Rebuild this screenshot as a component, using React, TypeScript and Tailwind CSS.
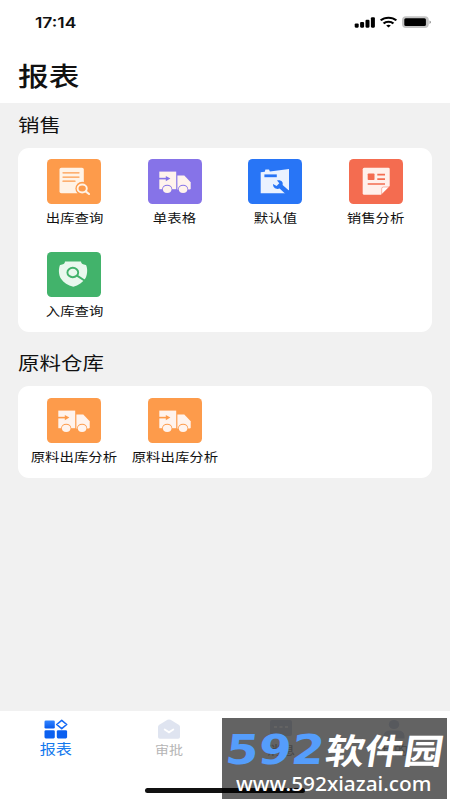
import React from "react";

type IconProps = { color: string };

function Tile({ color, children }: { color: string; children: React.ReactNode }) {
  return (
    <svg width="54" height="45" viewBox="0 0 54 45" className="block shrink-0">
      <rect width="54" height="45" rx="4.5" fill={color} />
      {children}
    </svg>
  );
}

function DocSearch({ color }: IconProps) {
  return (
    <Tile color={color}>
      <rect x="12.5" y="8.7" width="24.3" height="25.5" rx="1.8" fill="#fff3e6" />
      <path d="M16 13.8H32M16 18.1H32M16 22.2H28" stroke={color} strokeWidth="1.3" strokeLinecap="round" />
      <circle cx="35.2" cy="29.5" r="6.8" fill={color} />
      <path d="M38.5 32.5L42.3 35.4" stroke={color} strokeWidth="4" />
      <ellipse cx="35.2" cy="29.5" rx="4.6" ry="4" fill={color} stroke="#fff3e6" strokeWidth="1.9" />
      <path d="M38.7 32.4L42 35" stroke="#fff3e6" strokeWidth="2.1" strokeLinecap="round" />
    </Tile>
  );
}

function Truck({ color }: IconProps) {
  return (
    <Tile color={color}>
      <path d="M11.3 12.6H28.2V30.2H11.3Z" fill="#fff3ed" />
      <path d="M29.4 16.4H36.3L42.7 23.2V29.3Q42.7 30.5 41.4 30.5H29.4Z" fill="#fff3ed" />
      <path d="M10.5 19.6H19" stroke={color} strokeWidth="1.6" />
      <path d="M17.8 16.9L22.4 19.6L17.8 22.3Z" fill={color} />
      <ellipse cx="19.2" cy="30.2" rx="5.1" ry="4.4" fill={color} />
      <ellipse cx="35.1" cy="30.2" rx="5.1" ry="4.4" fill={color} />
      <ellipse cx="19.2" cy="30.3" rx="4.3" ry="3.6" fill="#fff3ed" />
      <ellipse cx="35.1" cy="30.3" rx="4.3" ry="3.6" fill="#fff3ed" />
    </Tile>
  );
}

function Wrench({ color }: IconProps) {
  return (
    <Tile color={color}>
      <path d="M12.7 13.2L16.8 12.8L17.4 10.5H21L21.9 12.5L41 10V31L38 34.3H12.7Z" fill="#eaf2ff" />
      <path d="M16.4 15.4H28.8V18.2H16.4Z" fill={color} />
      <path d="M29 21.5C33 20.5 35.5 23 34.6 26L42 32.5L38.6 36L31.6 29.6C28 30.8 24.9 28.7 25 25L28.6 26.9L31.3 24.2Z" fill={color} />
    </Tile>
  );
}

function Report({ color }: IconProps) {
  return (
    <Tile color={color}>
      <path d="M15.2 8.7H39.3Q40.7 8.7 40.7 10V27L32 35.7H15.2Q13.7 35.7 13.7 34.2V10.2Q13.7 8.7 15.2 8.7Z" fill="#fff0eb" />
      <path d="M32.7 35.2V29.7Q32.7 28 34.5 28H40L32.7 35.2Z" fill="#fff" stroke={color} strokeWidth=".5" />
      <rect x="18.7" y="14.5" width="6.8" height="6.5" rx=".8" fill={color} />
      <path d="M28.3 15.6H36M28.3 20.2H36M18.7 25H36" stroke={color} strokeWidth="1.7" />
    </Tile>
  );
}

function Shield({ color }: IconProps) {
  return (
    <Tile color={color}>
      <path d="M18 9.6H34C34 11.8 36.5 13 39 12.9C40.6 15.8 40.7 21.7 38.6 26C36 30.6 31.4 33.3 26.3 34.8C20.9 33.2 16.6 30.8 14 26.7C11.5 22.4 11.4 16.8 13 12.9C15.7 13 18 11.8 18 9.6Z" fill="#e9f8ee" />
      <ellipse cx="25.8" cy="20.5" rx="5.4" ry="4.7" fill="none" stroke={color} strokeWidth="1.9" />
      <path d="M30 23.7L39 29.5" stroke={color} strokeWidth="2" />
    </Tile>
  );
}

function Entry({ icon, label }: { icon: React.ReactNode; label: string }) {
  return (
    <div className="flex h-[92.5px] w-[100.5px] flex-col items-center">
      {icon}
      <span className="mt-[5.2px] block origin-center scale-x-[1.17] text-[12.3px] leading-[18px] whitespace-nowrap">{label}</span>
    </div>
  );
}

function Section({ title, className, children }: { title: string; className: string; children: React.ReactNode }) {
  return (
    <section>
      <h2 className="ml-[18px] h-[45px] w-max origin-left scale-x-[1.18] text-[18.2px] leading-[43px]">{title}</h2>
      <div className={`mx-[18px] flex flex-wrap content-start rounded-[11px] bg-white px-1.5 pt-[11.5px] ${className}`}>{children}</div>
    </section>
  );
}

function StatusBar() {
  return (
    <div className="flex h-11 items-center pl-[35px]">
      <span className="mt-[2px] w-max origin-left scale-x-[1.21] font-['Inter'] text-[14.4px] leading-none font-semibold">17:14</span>
      <svg width="80" height="16" viewBox="0 0 80 16" className="ml-auto mr-[17px]">
        <g fill="#000">
          <rect x="1.7" y="9.5" width="4" height="4.2" rx="1.1" />
          <rect x="7.1" y="7.9" width="4" height="5.8" rx="1.1" />
          <rect x="12.5" y="5.8" width="4" height="7.9" rx="1.1" />
          <rect x="17.9" y="3.2" width="4" height="10.5" rx="1.1" />
        </g>
        <g transform="translate(35.5 12.1) scale(1.17 1)" fill="none" stroke="#000" strokeWidth="2">
          <path d="M-6.7-5.7A9.5 9.5 0 0 1 6.7-5.7" />
          <path d="M-4.2-2.6A5.8 5.8 0 0 1 4.2-2.6" />
          <path d="M-2-.6Q0-2.2 2-.6L0 1.4Z" fill="#000" stroke="none" />
        </g>
        <rect x="49" y="2.3" width="26.8" height="11.7" rx="4" fill="#c4c4c4" />
        <rect x="51.3" y="4.3" width="21.6" height="7.8" rx="1.5" fill="#000" />
        <path d="M76.6 6.5V9.9Q79 8.2 76.6 6.5Z" fill="#777" />
      </svg>
    </div>
  );
}

function Tab({ label, active = false, children }: { label: string; active?: boolean; children: React.ReactNode }) {
  return (
    <div className="flex flex-1 flex-col items-center pt-[7px]">
      <svg width="26" height="22" viewBox="0 0 26 22" className="block">{children}</svg>
      <span className={active ? "-mt-[2.5px] block scale-x-[1.17] text-[13.8px] leading-5 text-[#1479ed]" : "block scale-x-[1.17] text-[12px] leading-5 text-[#b5b5b5]"}>{label}</span>
    </div>
  );
}

export default function App() {
  return (
    <main className="relative flex h-[800px] w-[450px] flex-col overflow-hidden bg-[#f1f1f1] font-['Noto_Sans_CJK_SC',sans-serif] text-[#111]">
      <header className="h-[102.5px] bg-white">
        <StatusBar />
        <h1 className="ml-[18px] w-max origin-left scale-x-[1.18] text-[26px] leading-[62px] font-medium">报表</h1>
      </header>

      <Section title="销售" className="h-[184px]">
        <Entry icon={<DocSearch color="#fd9b4b" />} label="出库查询" />
        <Entry icon={<Truck color="#8673e8" />} label="单表格" />
        <Entry icon={<Wrench color="#2875f6" />} label="默认值" />
        <Entry icon={<Report color="#f46c50" />} label="销售分析" />
        <Entry icon={<Shield color="#42b36b" />} label="入库查询" />
      </Section>

      <div className="h-[9.5px]" />
      <Section title="原料仓库" className="h-[92px]">
        <Entry icon={<Truck color="#fd9b4b" />} label="原料出库分析" />
        <Entry icon={<Truck color="#fd9b4b" />} label="原料出库分析" />
      </Section>

      <nav className="mt-auto flex h-[89px] bg-white">
        <Tab label="报表" active>
          <defs>
            <linearGradient id="tabBlue" x2="0" y2="1">
              <stop stopColor="#3485ff" />
              <stop offset="1" stopColor="#0759ed" />
            </linearGradient>
          </defs>
          <rect x="1.5" y="2.5" width="10.3" height="8" rx="1.3" fill="url(#tabBlue)" />
          <rect x="1.5" y="12.2" width="10.3" height="8.2" rx="1.3" fill="#0b60f0" />
          <rect x="13.8" y="12.2" width="10.3" height="8.2" rx="1.3" fill="#0b60f0" />
          <path d="M18.7 2.4L23.7 6.5L18.7 10.6L13.7 6.5Z" fill="white" stroke="#1469f5" strokeWidth="1.6" strokeLinejoin="round" />
        </Tab>
        <Tab label="审批">
          <path d="M2 9Q2 7.5 3.3 6.7L11.5 1.8Q13 1 14.5 1.8L22.7 6.7Q24 7.5 24 9V19Q24 20.7 22.2 20.7H3.8Q2 20.7 2 19Z" fill="#dfe4f0" />
          <path d="M8.7 11.4L13 14.3L17.3 11.4" fill="none" stroke="white" strokeWidth="1.8" strokeLinecap="round" />
        </Tab>
        <Tab label="消息">
          <path d="M4 2H22Q24 2 24 4V16Q24 18 22 18H16L13 20L10 18H4Q2 18 2 16V4Q2 2 4 2Z" fill="#dfe4f0" />
          <path d="M6 9H9M11.5 9H14.5M17 9H20" stroke="white" strokeWidth="2" />
        </Tab>
        <Tab label="我的">
          <ellipse cx="13" cy="6.5" rx="5.2" ry="4.6" fill="#dfe4f0" />
          <path d="M2.5 20.5V18Q3 12.5 9 12.5H17Q23 12.5 23.5 18V20.5Z" fill="#dfe4f0" />
        </Tab>
      </nav>

      <div className="absolute top-[788.3px] left-[145px] h-[4.4px] w-[160px] rounded-full bg-[#111]" />

      <aside className="absolute top-[718px] left-[222px] h-[81px] w-[225px] bg-black/61">
        <div className="flex h-[54px] pt-[14px] pl-[4px]">
          <span className="block h-9 w-[100px] origin-left scale-x-[1.15] -skew-x-6 font-['DejaVu_Sans'] text-[41px] leading-[37px] font-bold text-[#559dfb]">592</span>
          <span className="block h-9 w-[117px] origin-left scale-x-[1.12] -skew-x-8 text-[35px] leading-[33px] font-bold whitespace-nowrap text-white">软件园</span>
        </div>
        <p className="ml-[14px] w-max origin-left scale-x-[1.015] font-['Noto_Sans'] text-[20.5px] leading-[22px] font-medium text-white">www.592xiazai.com</p>
      </aside>
    </main>
  );
}
